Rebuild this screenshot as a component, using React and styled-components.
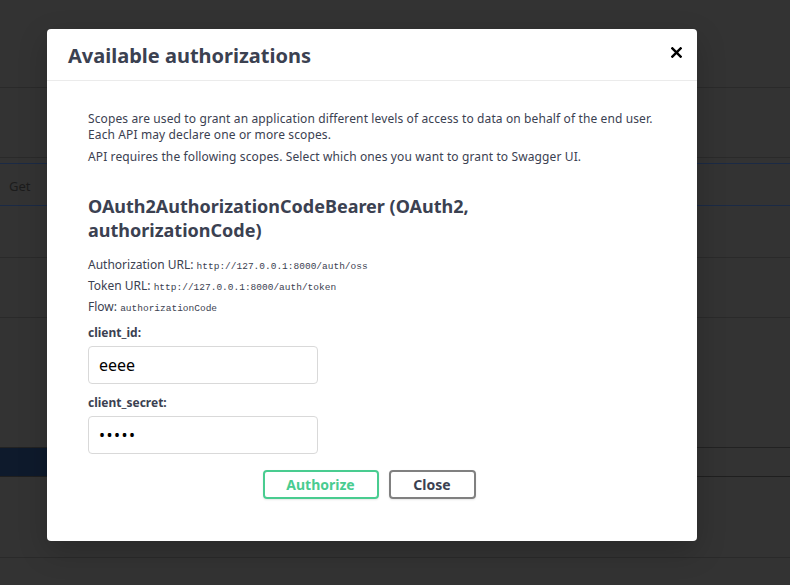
import styled, { createGlobalStyle } from "styled-components"

const GlobalStyle = createGlobalStyle`
  html, body {
    margin: 0;
    padding: 0;
    background: #333333;
  }
  body {
    font-family: "Noto Sans", "Open Sans", sans-serif;
  }
`

const Page = styled.div`
  position: relative;
  width: 790px;
  height: 585px;
  overflow: hidden;
  background: #333333;
  display: flex;
  flex-direction: column;
`

const Band = styled.div`
  height: ${props => props.h}px;
  flex-shrink: 0;
  border-bottom: 1px solid ${props => props.line || '#2a2a2a'};
  background: ${props => props.bg || 'transparent'};
  display: flex;
  align-items: center;
  box-sizing: border-box;
`

const Side = styled.div`
  width: 47px;
  height: 100%;
  background: ${props => props.bg || 'transparent'};
`

const GetLabel = styled.span`
  font-size: 13px;
  color: #1c1c1c;
  padding-left: 9px;
  padding-top: 2px;
`

const Overlay = styled.div`
  position: absolute;
  inset: 0;
`

const Modal = styled.div`
  position: absolute;
  left: 47px;
  top: 29px;
  width: 650px;
  height: 512px;
  background: #fff;
  border-radius: 4px;
  box-shadow: 0 10px 30px rgba(0, 0, 0, 0.2);
  display: flex;
  flex-direction: column;
`

const ModalHeader = styled.div`
  height: 51px;
  display: flex;
  align-items: center;
  justify-content: space-between;
  padding: 0 14px 0 21px;
  border-bottom: 1px solid #ebebeb;
`

const Title = styled.h3`
  margin: 0;
  font-size: 20px;
  font-weight: 700;
  color: #3b4151;
  padding-top: 2px;
`

const CloseIcon = styled.button`
  border: none;
  background: none;
  padding: 0;
  margin-bottom: 5px;
  width: 14px;
  height: 14px;
  display: flex;
  align-items: center;
  justify-content: center;
  cursor: pointer;
`

const Body = styled.div`
  padding: 30px 41px 0;
  color: #3b4151;
`

const Para = styled.p`
  margin: 0 0 ${props => props.mb || 0}px;
  font-size: 12px;
  line-height: 16px;
  letter-spacing: 0.12px;
  color: #3b4151;
`

const Scheme = styled.h4`
  margin: 29px 0 15px;
  font-size: 18px;
  line-height: 24px;
  font-weight: 700;
  color: #3b4151;
`

const Meta = styled.p`
  margin: 0 0 5px;
  font-size: 12px;
  line-height: 16px;
  color: #3b4151;
`

const Code = styled.code`
  font-family: "Liberation Mono", "DejaVu Sans Mono", monospace;
  font-size: 9.5px;
  line-height: 1;
  color: #3b4151;
`

const Label = styled.label`
  display: block;
  margin-top: ${props => props.mt || 0}px;
  font-size: 12px;
  font-weight: 700;
  color: #3b4151;
  line-height: 16px;
`

const Input = styled.input`
  display: block;
  box-sizing: border-box;
  width: 230px;
  height: 38px;
  margin-top: 5px;
  padding: 0 10px;
  border: 1px solid #d9d9d9;
  border-radius: 4px;
  font-family: "Noto Sans", sans-serif;
  font-size: 16px;
  letter-spacing: ${props => props.type === 'password' ? '1.5px' : '0'};
  color: #000;
  outline: none;
`

const Buttons = styled.div`
  display: flex;
  justify-content: center;
  gap: 10px;
  margin-top: 16px;
  padding-right: 6px;
`

const Btn = styled.button`
  box-sizing: border-box;
  width: ${props => props.w}px;
  height: 29px;
  background: transparent;
  border: 2px solid ${props => props.color};
  border-radius: 4px;
  color: ${props => props.text};
  font-family: "Noto Sans", sans-serif;
  font-size: 14px;
  font-weight: 700;
  box-shadow: 0 1px 2px rgba(0, 0, 0, 0.1);
  padding: 0;
  cursor: pointer;
`

function App () {
  return (
    <>
      <GlobalStyle />
      <Page>
        <Band h={88} />
        <Band h={70} />
        <Band h={6} line="#1b2a45" />
        <Band h={42} line="#1b2a45"><GetLabel>Get</GetLabel></Band>
        <Band h={52} />
        <Band h={60} />
        <Band h={130} line="#222">
          <Side />
        </Band>
        <Band h={29} line="#1f1f1f">
          <Side bg="#0e1a2c" />
        </Band>
        <Band h={81} />
        <Overlay>
          <Modal>
            <ModalHeader>
              <Title>Available authorizations</Title>
              <CloseIcon aria-label="close">
                <svg width="11" height="11" viewBox="0 0 12 12">
                  <path d="M1.5 1.5 L10.5 10.5 M10.5 1.5 L1.5 10.5" stroke="#000" strokeWidth="2.6" strokeLinecap="square" />
                </svg>
              </CloseIcon>
            </ModalHeader>
            <Body>
              <Para>Scopes are used to grant an application different levels of access to data on behalf of the end user.</Para>
              <Para mb={6}>Each API may declare one or more scopes.</Para>
              <Para>API requires the following scopes. Select which ones you want to grant to Swagger UI.</Para>
              <Scheme>OAuth2AuthorizationCodeBearer (OAuth2,<br />authorizationCode)</Scheme>
              <Meta>Authorization URL: <Code>http://127.0.0.1:8000/auth/oss</Code></Meta>
              <Meta>Token URL: <Code>http://127.0.0.1:8000/auth/token</Code></Meta>
              <Meta>Flow: <Code>authorizationCode</Code></Meta>
              <Label mt={10}>client_id:</Label>
              <Input type="text" defaultValue="eeee" />
              <Label mt={11}>client_secret:</Label>
              <Input type="password" defaultValue="eeeee" />
              <Buttons>
                <Btn w={116} color="#49cc90" text="#49cc90">Authorize</Btn>
                <Btn w={87} color="#808080" text="#3b4151">Close</Btn>
              </Buttons>
            </Body>
          </Modal>
        </Overlay>
      </Page>
    </>
  )
}

export default App
